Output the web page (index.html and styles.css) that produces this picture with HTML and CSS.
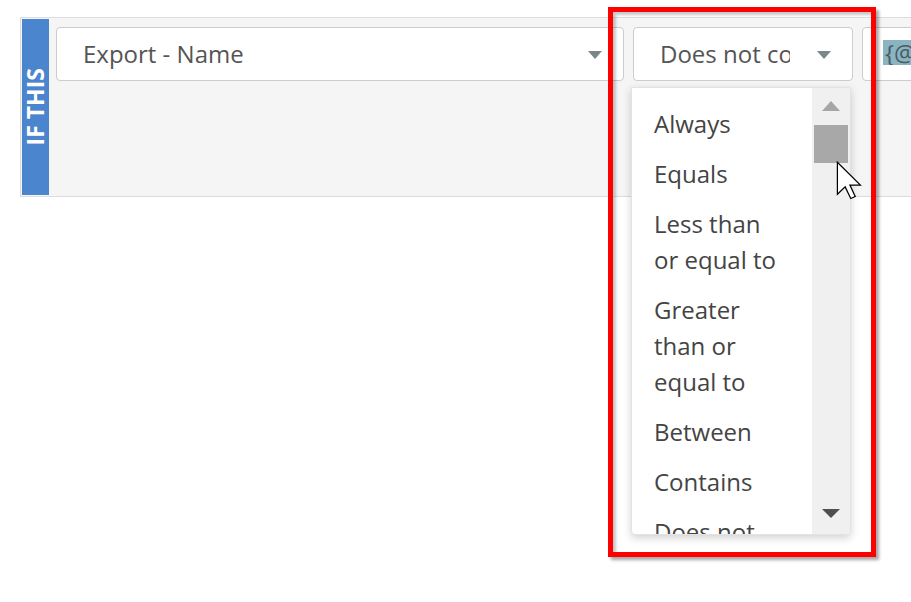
FILE: index.html
```html
<!DOCTYPE html>
<html lang="en">
<head>
<meta charset="utf-8">
<title>Rule condition</title>
<link rel="stylesheet" href="styles.css">
</head>
<body>
<div class="page">
  <div class="rule">
    <div class="tag"><span class="tag-text">IF THIS</span></div>
    <div class="fields">
      <div class="select field-wide">
        <span class="val">Export - Name</span>
        <span class="caret"></span>
      </div>
      <div class="select field-op">
        <span class="val">Does not contain</span>
        <span class="caret"></span>
        <div class="menu">
          <ul class="list">
            <li>Always</li>
            <li>Equals</li>
            <li>Less than or equal to</li>
            <li>Greater than or equal to</li>
            <li>Between</li>
            <li>Contains</li>
            <li>Does not contain</li>
          </ul>
          <div class="scrollbar">
            <span class="arrow-up"></span>
            <span class="thumb"></span>
            <span class="arrow-down"></span>
          </div>
        </div>
      </div>
      <div class="select field-value">
        <span class="token">{@Export.Name}</span>
      </div>
    </div>
  </div>
  <div class="callout"></div>
  <svg class="cursor" viewBox="0 0 13 19" width="27" height="39">
    <path d="M0.6 0.6 L0.6 16.2 L4.4 12.6 L7.1 18.3 L9.3 17.3 L6.7 11.7 L11.8 11.7 Z" fill="#fff" stroke="#000" stroke-width="0.6" stroke-linejoin="miter"/>
  </svg>
</div>
</body>
</html>
```
FILE: styles.css
```css
html, body {
  margin: 0;
  padding: 0;
  background: #ffffff;
  overflow: hidden;
}

body {
  width: 911px;
  height: 602px;
  font-family: "Open Sans", "Noto Sans", sans-serif;
}

.page {
  position: relative;
  width: 911px;
  height: 602px;
  padding-top: 17px;
  padding-left: 20px;
  box-sizing: border-box;
}

.rule {
  display: flex;
  width: 1000px;
  height: 180px;
  box-sizing: border-box;
  border: 1px solid #dcdcdc;
  background: #f5f5f5;
}

.tag {
  margin: 1px;
  width: 27px;
  background: #4a85cd;
  display: flex;
  align-items: center;
  justify-content: center;
}

.tag-text {
  writing-mode: vertical-rl;
  transform: rotate(180deg);
  color: #ffffff;
  font-weight: 700;
  font-size: 23px;
  line-height: 27px;
  white-space: nowrap;
}

.fields {
  display: flex;
  align-items: flex-start;
  gap: 9px;
  padding-top: 9px;
  padding-left: 6px;
}

.select {
  position: relative;
  display: flex;
  align-items: center;
  height: 54px;
  box-sizing: border-box;
  border: 1px solid #cccccc;
  border-radius: 4px;
  background: #ffffff;
  padding-left: 26px;
  font-size: 24px;
  color: #555555;
  flex: none;
}

.field-wide { width: 568px; }
.field-op { width: 220px; }
.field-value { width: 200px; padding-left: 20px; }

.val {
  flex: 1;
  min-width: 0;
  overflow: hidden;
  white-space: nowrap;
  line-height: 32px;
}

.caret {
  flex: none;
  width: 0;
  height: 0;
  margin: 2px 21px 0 27px;
  border-left: 7px solid transparent;
  border-right: 7px solid transparent;
  border-top: 8px solid #7a8689;
}

.token {
  display: inline-block;
  background: #8bb4c3;
  color: #4a5b61;
  font-size: 24px;
  line-height: 25px;
  height: 25px;
  overflow: hidden;
  padding: 0 2px;
  white-space: nowrap;
  margin-top: -3px;
}

.menu {
  position: absolute;
  left: -3px;
  top: 59px;
  width: 220px;
  height: 448px;
  box-sizing: border-box;
  border: 1px solid #e3e3e3;
  border-radius: 0 0 4px 4px;
  background: #ffffff;
  box-shadow: 0 3px 9px rgba(0, 0, 0, 0.18);
  display: flex;
  overflow: hidden;
  z-index: 2;
}

.list {
  list-style: none;
  margin: 0;
  width: 180px;
  box-sizing: border-box;
  padding: 11px 22px 0 22px;
  overflow: hidden;
  color: #444444;
  font-size: 24px;
  line-height: 36px;
}

.list li {
  padding: 7px 0;
}

.scrollbar {
  width: 38px;
  background: #f0f0f0;
  display: flex;
  flex-direction: column;
  align-items: center;
}

.arrow-up {
  margin-top: 13px;
  width: 0;
  height: 0;
  border-left: 9px solid transparent;
  border-right: 9px solid transparent;
  border-bottom: 10px solid #a6a6a6;
}

.thumb {
  margin-top: 14px;
  width: 34px;
  height: 38px;
  background: #a8a8a8;
}

.arrow-down {
  margin-top: auto;
  margin-bottom: 16px;
  width: 0;
  height: 0;
  border-left: 9px solid transparent;
  border-right: 9px solid transparent;
  border-top: 9px solid #4f4f4f;
}

.callout {
  position: absolute;
  left: 608px;
  top: 7px;
  width: 268px;
  height: 550px;
  box-sizing: border-box;
  border: 5px solid #ff0000;
  box-shadow: 3px 3px 3px rgba(0, 0, 0, 0.35), inset 3px 3px 3px rgba(0, 0, 0, 0.22);
  z-index: 3;
}

.cursor {
  position: absolute;
  left: 836px;
  top: 161px;
  z-index: 4;
}
```
